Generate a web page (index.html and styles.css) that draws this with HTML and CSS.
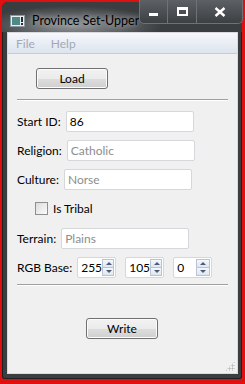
FILE: index.html
```html
<!DOCTYPE html>
<html lang="en">
<head>
    <meta charset="UTF-8">
    <title>Province Set-Upper</title>
    <link rel="stylesheet" href="styles.css">
</head>
<body>
    <div class="window">
        <div class="titlebar">
            <svg class="app-icon" width="15" height="12" viewBox="0 0 15 12">
                <rect x="0.5" y="0.5" width="14" height="11" fill="#e8eef0" stroke="#8a9aa0"/>
                <rect x="2" y="2" width="8" height="8" fill="#4f8a86"/>
                <rect x="11" y="2" width="2" height="5" fill="#2a2a2a"/>
                <rect x="11" y="8" width="2" height="2" fill="#2a2a2a"/>
            </svg>
            <span class="title">Province Set-Upper</span>
            <div class="caption">
                <div class="cbtn min"><span></span></div>
                <div class="cbtn max"><span></span></div>
                <div class="cbtn close">
                    <svg width="12" height="10" viewBox="0 0 12 10">
                        <path d="M1.5 1 L10.5 9 M10.5 1 L1.5 9" stroke="#fff" stroke-width="2.4"/>
                    </svg>
                </div>
            </div>
        </div>
        <div class="client">
            <div class="menubar">
                <span>File</span>
                <span>Help</span>
            </div>
            <div class="content">
                <div class="btn-row load-row"><div class="button">Load</div></div>
                <div class="sep"></div>

                <div class="row r-start"><label>Start ID:</label><div class="field">86</div></div>
                <div class="row r-religion"><label>Religion:</label><div class="field dim">Catholic</div></div>
                <div class="row r-culture"><label>Culture:</label><div class="field dim">Norse</div></div>
                <div class="row r-check"><div class="checkbox"></div><label>Is Tribal</label></div>
                <div class="row r-terrain"><label>Terrain:</label><div class="field dim">Plains</div></div>
                <div class="row r-rgb">
                    <label>RGB Base:</label>
                    <div class="spin"><span class="val">255</span><div class="arrows"><i class="up"></i><i class="down"></i></div></div>
                    <div class="spin"><span class="val">105</span><div class="arrows"><i class="up"></i><i class="down"></i></div></div>
                    <div class="spin"><span class="val">0</span><div class="arrows"><i class="up"></i><i class="down"></i></div></div>
                </div>
                <div class="sep sep2"></div>
                <div class="btn-row write-row"><div class="button">Write</div></div>
                <div class="grip"></div>
            </div>
        </div>
    </div>
</body>
</html>
```

FILE: styles.css
```css
body {
    margin: 0;
    background: #e01010;
    font-family: Lato, "Liberation Sans", sans-serif;
    font-size: 12px;
    color: #000;
}
.window {
    margin: 2px 3px 0 2px;
    height: 377px;
    background: #3b3e41;
    border-radius: 6px 6px 3px 3px;
    box-shadow: inset 0 0 0 1px #1d1f21;
    display: flex;
    flex-direction: column;
    padding: 0 4px 5px 5px;
    box-sizing: border-box;
}
.titlebar {
    height: 30px;
    display: flex;
    align-items: flex-start;
    background: radial-gradient(ellipse 90px 20px at 70px 24px, #8e9193 0%, #5c5f62 60%, #3b3e41 100%);
    margin: 0 -4px 0 -5px;
    padding-left: 6px;
    border-radius: 6px 6px 0 0;
}
.app-icon {
    margin-top: 13px;
    margin-left: 2px;
    flex-shrink: 0;
}
.title {
    margin-left: 7px;
    margin-top: 11px;
    font-size: 12.5px;
    white-space: nowrap;
    color: #000;
    text-shadow: 0 0 6px rgba(255,255,255,0.7);
}
.caption {
    margin-left: auto;
    margin-right: 4px;
    margin-top: -2px;
    display: flex;
    flex-shrink: 0;
    height: 23px;
    border: 1px solid #6e7275;
    border-top: none;
    border-radius: 0 0 5px 5px;
    background: linear-gradient(#5d6064, #3d4043);
    overflow: hidden;
}
.cbtn {
    height: 100%;
    display: flex;
    align-items: center;
    justify-content: center;
    border-left: 1px solid #6e7275;
}
.cbtn:first-child { border-left: none; }
.min { width: 27px; }
.max { width: 28px; }
.close { width: 45px; }
.min span {
    width: 9px;
    height: 3px;
    background: #fff;
    margin-top: 6px;
}
.max span {
    width: 7px;
    height: 4px;
    border: 2px solid #fff;
    border-top-width: 3px;
}
.client {
    flex: 1;
    background: #f0f0f0;
    border: 1px solid #d8dadc;
    display: flex;
    flex-direction: column;
}
.menubar {
    height: 20px;
    background: linear-gradient(#f5f7fb, #dde4ee);
    border-bottom: 1px solid #c6ccd4;
    display: flex;
    align-items: center;
    padding-left: 8px;
    color: #a4a8b4;
    gap: 16px;
}
.content {
    flex: 1;
    position: relative;
    padding: 0 9px;
}
.btn-row {
    display: flex;
}
.load-row {
    padding: 14px 0 0 19px;
}
.write-row {
    padding: 32px 0 0 69px;
}
.button {
    width: 70px;
    height: 19px;
    border: 1px solid #707070;
    border-radius: 3px;
    background: linear-gradient(#f2f2f2 0%, #ebebeb 50%, #dddddd 51%, #cfcfcf 100%);
    display: flex;
    align-items: center;
    justify-content: center;
    box-shadow: inset 0 0 0 1px #fcfcfc;
}
.sep {
    height: 1px;
    background: #a0a0a0;
    margin: 10px 0 0 0;
    border-bottom: 1px solid #fff;
}
.sep2 { margin-top: 6px; }
.row {
    display: flex;
    align-items: center;
    height: 21px;
    margin-top: 8px;
}
.r-start { margin-top: 10px; }
.r-terrain { margin-top: 9px; }
.row label {
    margin-right: 5px;
    white-space: nowrap;
}
.field {
    width: 123px;
    height: 19px;
    background: #fff;
    border: 1px solid #d5d7da;
    border-radius: 2px;
    display: flex;
    align-items: center;
    padding-left: 3px;
}
.dim { color: #8d8d8d; }
.r-check { padding-left: 18px; }
.checkbox {
    width: 11px;
    height: 11px;
    border: 1px solid #8e8f8f;
    background: linear-gradient(135deg, #dcdcdc, #fbfbfb);
    margin-right: 5px;
}
.r-rgb label { margin-right: 5px; }
.spin {
    width: 37px;
    height: 19px;
    background: #fff;
    border: 1px solid #d5d7da;
    border-radius: 2px;
    display: flex;
    align-items: center;
    margin-right: 9px;
    flex-shrink: 0;
}
.spin .val {
    flex: 1;
    padding-left: 3px;
}
.arrows {
    width: 14px;
    height: 17px;
    display: flex;
    flex-direction: column;
    margin-right: 1px;
}
.arrows i {
    flex: 1;
    border: 1px solid #b8c4d4;
    background: linear-gradient(#f4f7fb, #dde6f0);
    position: relative;
}
.arrows i + i { border-top: none; }
.arrows i::after {
    content: "";
    position: absolute;
    left: 3px;
    top: 2px;
    border-left: 3px solid transparent;
    border-right: 3px solid transparent;
}
.up::after { border-bottom: 3px solid #4a5a78; }
.down::after { border-top: 3px solid #4a5a78; }
.grip {
    position: absolute;
    right: 2px;
    bottom: 2px;
    width: 10px;
    height: 10px;
    background: radial-gradient(circle, #b0b0b0 0.8px, transparent 1.2px) 0 0 / 3px 3px;
    clip-path: polygon(100% 0, 100% 100%, 0 100%);
}
```
